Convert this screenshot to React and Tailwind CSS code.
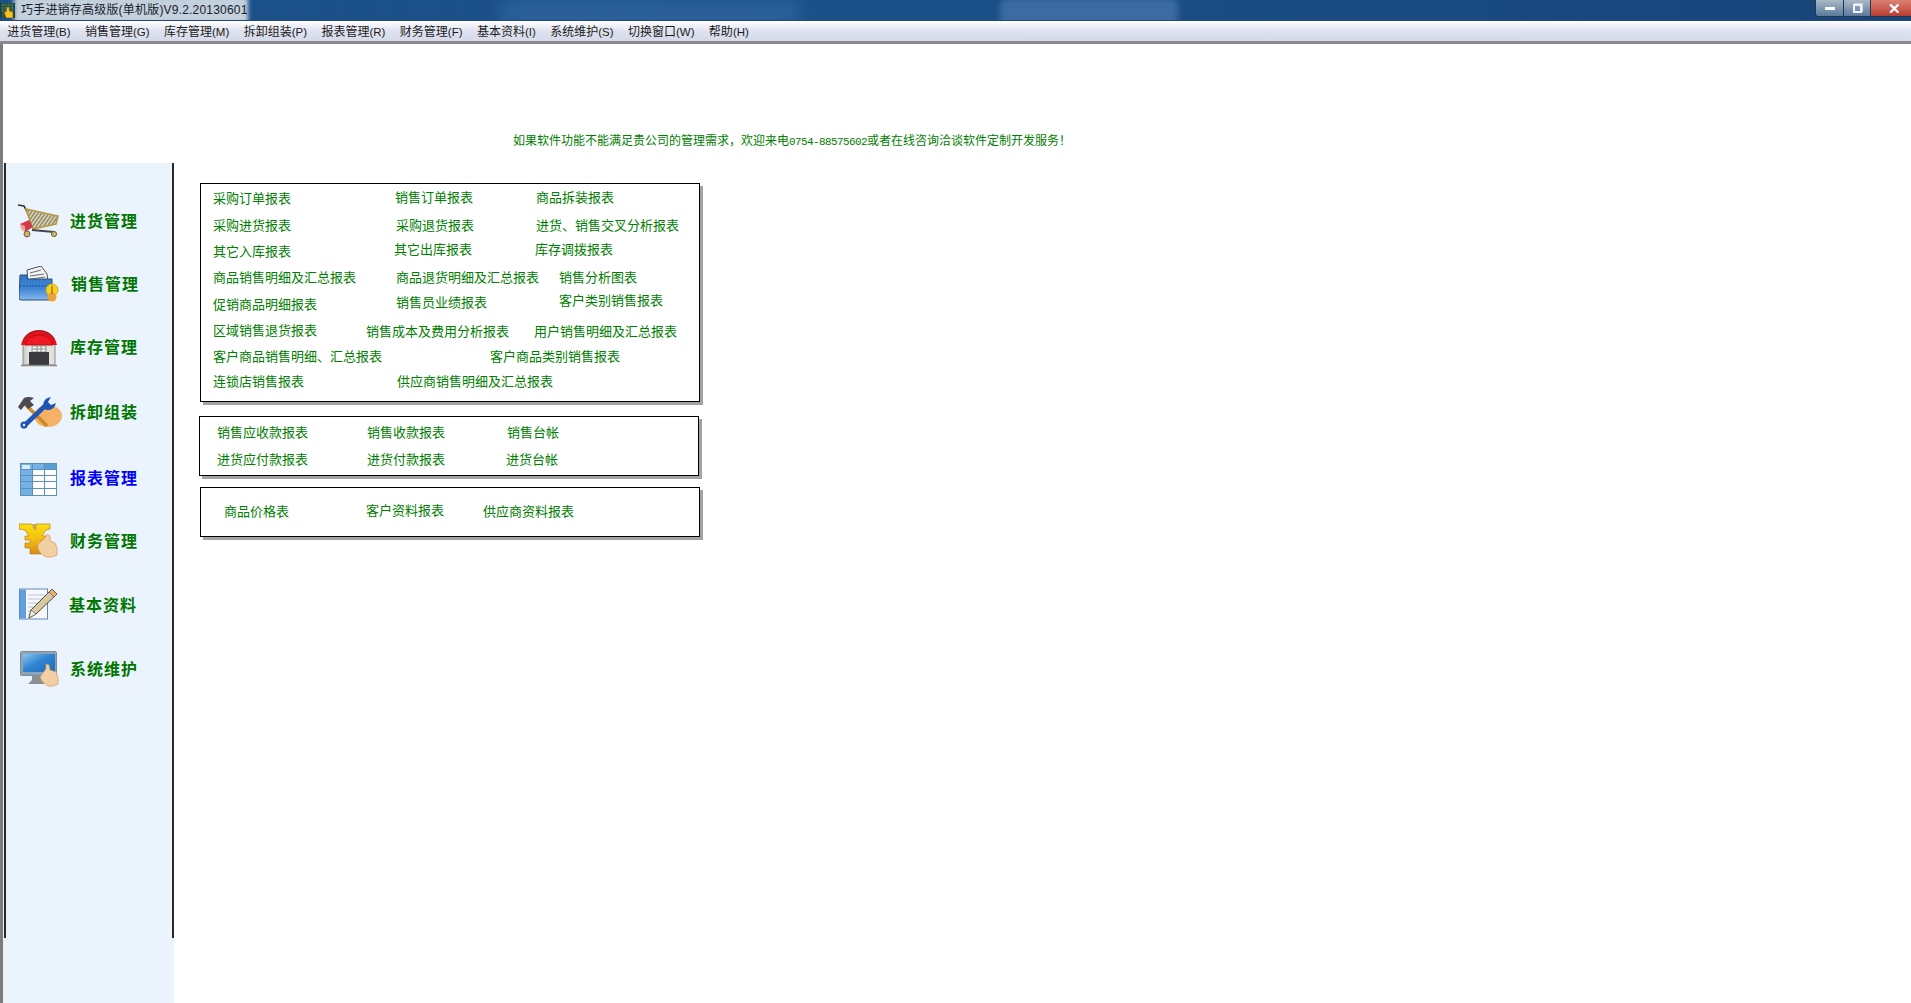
import React from "react";

const Cart = () => (
  <svg width="41" height="34" viewBox="0 0 41 34">
    <defs>
      <pattern id="hatch" width="3" height="3" patternUnits="userSpaceOnUse" patternTransform="rotate(35)">
        <rect width="3" height="3" fill="#e9e0b8" />
        <rect width="1.4" height="3" fill="#7d7a68" />
      </pattern>
    </defs>
    <path d="M0 1 L6 2 L11 12 L15 25" fill="none" stroke="#33302c" strokeWidth="1.6" />
    <path d="M8 5 L40 12 L38 20 L15 25 Z" fill="url(#hatch)" stroke="#b59a45" strokeWidth="1.6" />
    <path d="M14 26 L36 28" stroke="#45454d" strokeWidth="2.2" />
    <path d="M2 20 L11 16 L15 23 L7 28 Z" fill="#d4394a" />
    <path d="M2 20 L7 22 L7 28 L3 25 Z" fill="#eaa2a0" />
    <circle cx="9" cy="30" r="3" fill="#c9b36a" stroke="#6d6238" />
    <circle cx="36" cy="30" r="2.6" fill="#c9b36a" stroke="#6d6238" />
  </svg>
);

const Folder = () => (
  <svg width="40" height="36" viewBox="0 0 40 36">
    <defs>
      <linearGradient id="fold" x1="0" y1="0" x2="0" y2="1">
        <stop offset="0" stopColor="#2f78c4" />
        <stop offset="0.55" stopColor="#3f86d4" />
        <stop offset="1" stopColor="#86b8ec" />
      </linearGradient>
    </defs>
    <path d="M8 4 L22 0 L28 8 L29 16 L9 16 Z" fill="#f4f4f4" stroke="#4a5058" />
    <path d="M11 7 L22 4 M11 10 L25 8 M12 13 L26 11" stroke="#6a7078" strokeWidth="1.2" />
    <path d="M1 9 L8 9 L8 13 L33 13 L33 33 Q33 34 32 34 L2 34 Q0 34 0 32 Z" fill="url(#fold)" stroke="#2e4f78" />
    <path d="M1 20 H32" stroke="#1d4f8e" strokeDasharray="2 1" />
    <circle cx="33" cy="24" r="6" fill="#f6d21e" stroke="#d9a51a" />
    <circle cx="33" cy="31" r="4.6" fill="#eaa43a" />
    <path d="M33 20 V28" stroke="#8a6a10" strokeWidth="1.2" />
  </svg>
);

const Store = () => (
  <svg width="38" height="37" viewBox="0 0 38 37">
    <defs>
      <linearGradient id="wall" x1="0" y1="0" x2="1" y2="0">
        <stop offset="0" stopColor="#c4c4c0" />
        <stop offset="0.25" stopColor="#f0f0ec" />
        <stop offset="1" stopColor="#dededa" />
      </linearGradient>
    </defs>
    <rect x="3" y="14" width="32" height="21" fill="url(#wall)" stroke="#8d8d8a" />
    <path d="M1 15 C3 5 11 0 19 0 C27 0 35 5 37 15 Z" fill="#e9101c" />
    <path d="M5 15 C7 9 12 5 19 5 C26 5 31 9 33 15 Z" fill="#f01a22" stroke="#b80c14" />
    <path d="M4 9 C8 3 13 1 19 1 C25 1 30 3 34 9" fill="none" stroke="#a8232a" strokeWidth="1.5" />
    <path d="M12 16 H26 V22 H12 Z M12 19 H26 M17 16 V22 M21 16 V22" fill="#fbfbfb" stroke="#8a8a8a" />
    <rect x="9" y="22" width="20" height="13" fill="#3a3a3c" />
    <path d="M1 35.5 H37" stroke="#8a8a88" strokeWidth="1.5" />
  </svg>
);

const Tools = () => (
  <svg width="45" height="33" viewBox="0 0 45 33">
    <ellipse cx="31" cy="20" rx="14" ry="11" fill="#f5b266" />
    <path d="M8 8 L30 30" stroke="#c98a2a" strokeWidth="3.6" />
    <path d="M1 11 L7 2 Q11 0 17 2 L13 5 L17 9 L11 13 L8 9 L4 14 Z" fill="#4a4a50" />
    <path d="M7 30 L29 9" stroke="#1f55b4" strokeWidth="4.6" strokeLinecap="round" />
    <path d="M26 10 Q26 2 34 1 L31 6 L34 9 L39 7 Q37 15 29 14 Z" fill="#1f55b4" />
    <circle cx="7" cy="29" r="3.6" fill="#1f55b4" />
    <circle cx="7" cy="29" r="1.2" fill="#ebf4fc" />
  </svg>
);

const Table = () => (
  <svg width="37" height="33" viewBox="0 0 37 33">
    <rect x="0.5" y="0.5" width="36" height="32" fill="#ffffff" stroke="#5b8fbd" />
    <rect x="1" y="1" width="11" height="31" fill="#74b2e6" />
    <rect x="12" y="1" width="24" height="5" fill="#74b2e6" />
    <rect x="24" y="1" width="12" height="5" fill="#5a9ed8" />
    <rect x="2" y="2" width="8" height="4" fill="#d8ebfa" />
    <path d="M12.5 0 V33 M24.5 0 V33 M0 6.5 H37 M0 12.5 H37 M0 18.5 H37 M0 25.5 H37" stroke="#5b8fbd" fill="none" />
  </svg>
);

const Yen = () => (
  <svg width="39" height="35" viewBox="0 0 39 35">
    <defs>
      <linearGradient id="gold" x1="0" y1="0" x2="0" y2="1">
        <stop offset="0" stopColor="#fbe012" />
        <stop offset="0.5" stopColor="#f2c010" />
        <stop offset="1" stopColor="#d98a18" />
      </linearGradient>
    </defs>
    <path d="M0 1 H13 L15 5 L17 1 L31 1 V6 L27 7 L23 13 H27 V17 H22 V20 H27 V25 H22 V31 H11 V25 H6 V20 H11 V17 H6 V13 H10 L6 7 L0 6 Z" fill="url(#gold)" stroke="#b77f14" strokeWidth="0.7" />
    <path d="M14 1 L18 1 L17 7 L15 7 Z" fill="#c9a05a" />
    <path d="M19 21 L26 15 L28 11 L31 13 L31 18 L36 20 Q39 24 38 32 Q34 35 27 34 Q21 31 19 26 Z" fill="#f3cfa4" stroke="#d19c66" strokeWidth="0.7" />
  </svg>
);

const Note = () => (
  <svg width="38" height="32" viewBox="0 0 38 32">
    <rect x="0.5" y="1" width="28" height="30" fill="#f6f8fc" stroke="#5a8ac0" />
    <rect x="1" y="1.5" width="6" height="29" fill="#5f9fdc" />
    <path d="M9 7 H26 M9 11 H26 M9 15 H26 M9 19 H22 M9 23 H18 M9 27 H14" stroke="#b9c4d4" />
    <path d="M33 1 L38 6 L17 26 L10 30 L12 22 Z" fill="#d9c9a0" stroke="#4a4a44" />
    <path d="M33 1 L38 6 L35 9 L30 4 Z" fill="#e8b070" stroke="#4a4a44" strokeWidth="0.6" />
    <path d="M12 22 L17 26 L10 30 Z" fill="#f4f0e6" stroke="#4a4a44" strokeWidth="0.6" />
  </svg>
);

const Monitor = () => (
  <svg width="39" height="36" viewBox="0 0 39 36">
    <defs>
      <linearGradient id="scr" x1="0" y1="0" x2="1" y2="1">
        <stop offset="0" stopColor="#8dc6ee" />
        <stop offset="0.45" stopColor="#2f86d2" />
        <stop offset="1" stopColor="#1e6ab8" />
      </linearGradient>
    </defs>
    <path d="M12 24 H24 V29 L28 33 H8 L12 29 Z" fill="#8c8f92" />
    <rect x="0.5" y="0.5" width="36" height="24" rx="1" fill="#8ea3b6" stroke="#7b8b9a" />
    <rect x="3" y="3" width="32" height="18" fill="url(#scr)" />
    <path d="M20 26 L26 18 L26 13 L29 14 L30 19 L36 21 Q39 26 38 33 Q34 36 28 35 Q22 32 20 26 Z" fill="#f3cfa4" stroke="#d19c66" strokeWidth="0.7" />
  </svg>
);

const Nav = ({ icon, label, blue, className = "" }) => (
  <div className={`flex h-16 items-center ${className}`}>
    {icon}
    <span className={`text-[16px] leading-5 font-bold tracking-[1px] whitespace-nowrap ${blue ? "text-[#0000ff]" : "text-[#007500]"}`}>{label}</span>
  </div>
);

const MenuItem = ({ t, k }) => (
  <span className="px-[7.2px] whitespace-nowrap">
    {t}<span className="text-[11.5px]">({k})</span>
  </span>
);

const L = ({ className = "", children }) => (
  <span className={`block shrink-0 whitespace-nowrap ${className}`}>{children}</span>
);

export default function App() {
  return (
    <div className="flex h-screen w-full flex-col overflow-hidden bg-white text-[13px] leading-4 text-[#008000] [font-family:'Liberation_Sans','Noto_Sans_CJK_SC',sans-serif]">
      <header className="relative flex h-[20px] shrink-0 items-center overflow-hidden bg-gradient-to-r from-[#1c5088] via-[#1b4f88] to-[#17457a]">
        <div className="absolute top-[-4px] left-[14px] h-[28px] w-[234px] rounded bg-[#c3d0dd] blur-[2px]" />
        <div className="absolute top-[-2px] left-[1000px] h-[30px] w-[178px] rounded-lg bg-[#3c6ba3] blur-[3px]" />
        <div className="absolute top-[-2px] left-[500px] h-[30px] w-[300px] bg-[#2b5f99] blur-[8px]" />
        <svg className="relative ml-0 shrink-0" width="16" height="16" viewBox="0 0 16 16">
          <rect width="15" height="15" y="1" fill="#233f3c" />
          <path d="M1 3 H14 M1 6 H14 M1 9 H14 M3 1 V16 M6 1 V16 M9 1 V16 M12 1 V16" stroke="#3f8a6c" strokeWidth="0.8" />
          <path d="M6 16 L4 10 L6 10 L7 5 L9 5 L9.5 9 L13 10 L13 16 Z" fill="#f6c31e" stroke="#7a4b10" strokeWidth="0.6" />
        </svg>
        <span className="relative ml-[5px] text-[12px] tracking-[0.2px] whitespace-nowrap text-[#17202b]">巧手进销存高级版(单机版)V9.2.20130601</span>
        <div className="absolute top-0 right-0 flex h-[17px]">
          <div className="flex w-[28px] items-center justify-center rounded-bl-[3px] border-b border-l border-[#22384f] bg-gradient-to-b from-[#aab9c6] to-[#5a7a9b]">
            <div className="h-[3px] w-[10px] bg-white" />
          </div>
          <div className="flex w-[27px] items-center justify-center border-b border-l border-[#22384f] bg-gradient-to-b from-[#aab9c6] to-[#5a7a9b]">
            <div className="flex size-[9px] items-center justify-center border-2 border-[#eef2f5] shadow-[1px_-1px_0_#cfd8df]" />
          </div>
          <div className="flex w-[41px] items-center justify-center border-b border-l border-[#22384f] bg-gradient-to-b from-[#dc8074] to-[#b83c32] pl-[6px] text-[15px] leading-none font-bold text-white">✕</div>
        </div>
      </header>
      <nav className="flex h-[24px] shrink-0 items-center border-t border-b-[3px] border-t-[#27466c] border-b-[#8a8a8a] bg-gradient-to-b from-white via-[#dfe3f0] to-[#d5daea] pt-[2px] text-[12px] text-[#1c1c1c]">
        <div className="flex">
          <MenuItem t="进货管理" k="B" />
          <MenuItem t="销售管理" k="G" />
          <MenuItem t="库存管理" k="M" />
          <MenuItem t="拆卸组装" k="P" />
          <MenuItem t="报表管理" k="R" />
          <MenuItem t="财务管理" k="F" />
          <MenuItem t="基本资料" k="I" />
          <MenuItem t="系统维护" k="S" />
          <MenuItem t="切换窗口" k="W" />
          <MenuItem t="帮助" k="H" />
        </div>
      </nav>
      <div className="flex min-h-0 flex-1 flex-col border-l-[3px] border-[#7c7c7c]">
        <div className="h-[119px] shrink-0 pt-[89px] pl-[510px] text-[12px] whitespace-nowrap">
          如果软件功能不能满足贵公司的管理需求，欢迎来电<span className="font-['Liberation_Mono'] text-[11px] tracking-[-0.6px]">0754-88575602</span>或者在线咨询洽谈软件定制开发服务！
        </div>
        <div className="flex min-h-0 flex-1">
          <aside className="w-[171px] shrink-0 bg-[#ebf4fc]">
            <div className="ml-px h-[775px] border-x-2 border-[#26292c] pt-[27px]">
              <Nav label="进货管理" icon={<div className="mt-[-2px] mr-[11px] ml-[12px]"><Cart /></div>} />
              <Nav className="-mt-px" label="销售管理" icon={<div className="mt-[-2px] mr-[12px] ml-[13px]"><Folder /></div>} />
              <Nav className="-mt-px" label="库存管理" icon={<div className="mt-px mr-[12px] ml-[14px]"><Store /></div>} />
              <Nav className="mt-px" label="拆卸组装" icon={<div className="mt-[-2px] mr-[8px] ml-[11px]"><Tools /></div>} />
              <Nav className="mt-[2px]" blue label="报表管理" icon={<div className="mt-[1px] mr-[13px] ml-[14px]"><Table /></div>} />
              <Nav className="-mt-px" label="财务管理" icon={<div className="mt-[-4px] mr-[12px] ml-[13px]"><Yen /></div>} />
              <Nav label="基本资料" icon={<div className="mt-[-5px] mr-[12px] ml-[13px]"><Note /></div>} />
              <Nav label="系统维护" icon={<div className="mt-[-2px] mr-[11px] ml-[14px]"><Monitor /></div>} />
            </div>
          </aside>
          <main className="flex flex-col items-start pt-5 pl-[26px]">
            <section className="h-[219px] w-[500px] border border-black pt-[6px] pl-[12px] shadow-[3px_3px_0_#a3a3a3]">
              <div className="flex h-[28px]"><L className="mt-px w-[182px]">采购订单报表</L><L className="w-[141px]">销售订单报表</L><L>商品拆装报表</L></div>
              <div className="flex h-[24px]"><L className="w-[183px]">采购进货报表</L><L className="w-[140px]">采购退货报表</L><L>进货、销售交叉分析报表</L></div>
              <div className="flex h-[28px]"><L className="mt-[2px] w-[181px]">其它入库报表</L><L className="w-[141px]">其它出库报表</L><L>库存调拨报表</L></div>
              <div className="flex h-[23px]"><L className="w-[183px]">商品销售明细及汇总报表</L><L className="w-[163px]">商品退货明细及汇总报表</L><L>销售分析图表</L></div>
              <div className="flex h-[30px]"><L className="mt-[4px] w-[183px]">促销商品明细报表</L><L className="mt-[2px] w-[163px]">销售员业绩报表</L><L>客户类别销售报表</L></div>
              <div className="flex h-[26px]"><L className="w-[153px]">区域销售退货报表</L><L className="mt-px w-[168px]">销售成本及费用分析报表</L><L className="mt-px">用户销售明细及汇总报表</L></div>
              <div className="flex h-[25px]"><L className="w-[277px]">客户商品销售明细、汇总报表</L><L>客户商品类别销售报表</L></div>
              <div className="flex"><L className="w-[184px]">连锁店销售报表</L><L>供应商销售明细及汇总报表</L></div>
            </section>
            <section className="mt-[14px] -ml-px h-[60px] w-[500px] border border-black pt-[8px] pl-[17px] shadow-[3px_3px_0_#a3a3a3]">
              <div className="flex h-[27px]"><L className="w-[150px]">销售应收款报表</L><L className="w-[140px]">销售收款报表</L><L>销售台帐</L></div>
              <div className="flex"><L className="w-[150px]">进货应付款报表</L><L className="w-[139px]">进货付款报表</L><L>进货台帐</L></div>
            </section>
            <section className="mt-[11px] flex h-[50px] w-[500px] border border-black pt-[15px] pl-[23px] shadow-[3px_3px_0_#a3a3a3]">
              <L className="mt-px w-[142px]">商品价格表</L><L className="w-[117px]">客户资料报表</L><L className="mt-px">供应商资料报表</L>
            </section>
          </main>
        </div>
      </div>
    </div>
  );
}
